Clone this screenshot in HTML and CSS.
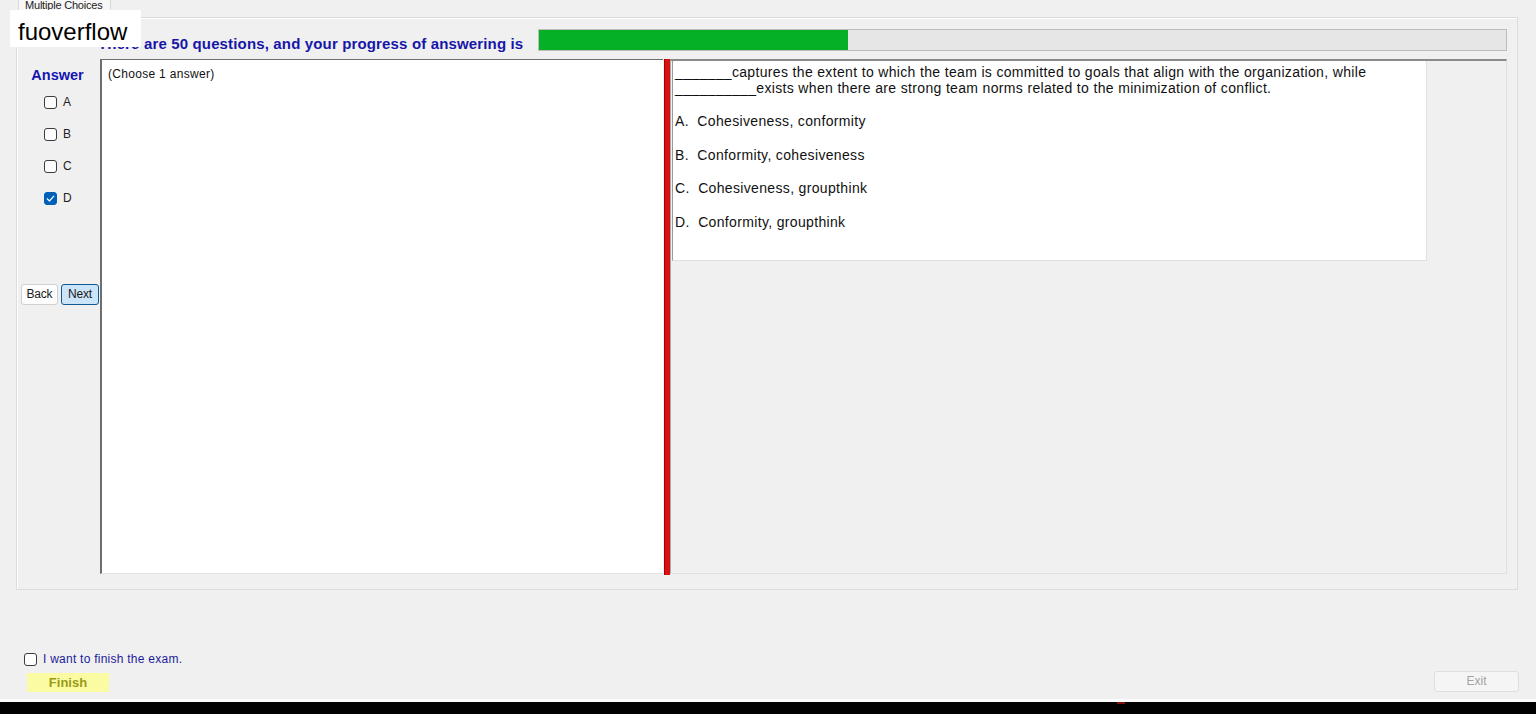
FILE: index.html
```html
<!DOCTYPE html>
<html lang="en">
<head>
<meta charset="utf-8">
<title>Multiple Choices</title>
<link rel="stylesheet" href="styles.css">
</head>
<body>
<div class="window">
  <div class="brand">fuoverflow</div>

  <div class="tabstrip">
    <div class="tab">Multiple Choices</div>
  </div>

  <div class="tabpage">
    <div class="header">
      <div class="title">There are 50 questions, and your progress of answering is</div>
      <div class="progress"><div class="progress-fill" style="width:309px"></div></div>
    </div>

    <div class="content">
      <div class="answers">
        <div class="answers-title">Answer</div>
        <label class="choice"><span class="box"></span><span>A</span></label>
        <label class="choice"><span class="box"></span><span>B</span></label>
        <label class="choice"><span class="box"></span><span>C</span></label>
        <label class="choice"><span class="box checked"><svg viewBox="0 0 13 13" width="13" height="13"><path d="M3.2 6.8 L5.5 9 L9.8 4.2" fill="none" stroke="#fff" stroke-width="1.2" stroke-linecap="round" stroke-linejoin="round"/></svg></span><span>D</span></label>
        <div class="nav">
          <button class="btn">Back</button>
          <button class="btn btn-focus">Next</button>
        </div>
      </div>

      <div class="notes">(Choose 1 answer)</div>

      <div class="splitter"></div>

      <div class="question-pane">
        <div class="question">
          <p class="stem">_______captures the extent to which the team is committed to goals that align with the organization, while<br>__________exists when there are strong team norms related to the minimization of conflict.</p>
          <p class="option">A.&nbsp; Cohesiveness, conformity</p>
          <p class="option">B.&nbsp; Conformity, cohesiveness</p>
          <p class="option">C.&nbsp; Cohesiveness, groupthink</p>
          <p class="option">D.&nbsp; Conformity, groupthink</p>
        </div>
      </div>
    </div>
  </div>

  <div class="footer">
    <div class="finish-group">
      <label class="confirm"><span class="box"></span><span>I want to finish the exam.</span></label>
      <button class="finish">Finish</button>
    </div>
    <button class="exit" disabled>Exit</button>
  </div>

  <div class="edge"></div>
  <div class="taskbar"><span class="tick"></span></div>
</div>
</body>
</html>
```

FILE: styles.css
```css
* {
  box-sizing: border-box;
}

html, body {
  margin: 0;
  padding: 0;
  background: #f0f0f0;
}

body {
  font-family: "Liberation Sans", Arial, sans-serif;
  color: #000;
}

.window {
  position: relative;
  width: 1536px;
  height: 714px;
  overflow: hidden;
  display: flex;
  flex-direction: column;
  background: #f0f0f0;
}

/* watermark label over the top-left corner */
.brand {
  position: absolute;
  left: 10px;
  top: 10px;
  width: 131px;
  height: 37px;
  padding-left: 8px;
  background: #fff;
  font-size: 24px;
  line-height: 43px;
  color: #000;
  z-index: 5;
}

/* tab header */
.tabstrip {
  height: 17px;
  flex: none;
  display: flex;
  align-items: flex-start;
  padding-left: 18px;
}

.tab {
  height: 14px;
  padding: 0 7px 0 6px;
  background: #f7f7f7;
  border: 1px solid #d9d9d9;
  border-top: none;
  border-bottom: none;
  font-size: 11px;
  line-height: 11px;
  color: #222;
  overflow: hidden;
  letter-spacing: -0.2px;
}

/* tab page body */
.tabpage {
  flex: none;
  margin-left: 16px;
  width: 1502px;
  height: 573px;
  border: 1px solid #dcdcdc;
  box-shadow: inset 1px 1px 0 #fff;
  display: flex;
  flex-direction: column;
}

.header {
  height: 41px;
  flex: none;
  display: flex;
  align-items: flex-start;
  padding-left: 81px;
  padding-top: 11px;
}

.title {
  width: 440px;
  padding-top: 6px;
  font-size: 15px;
  font-weight: bold;
  line-height: 17px;
  letter-spacing: 0.15px;
  color: #1616a8;
  white-space: nowrap;
}

.progress {
  width: 969px;
  height: 22px;
  background: #e6e6e6;
  border: 1px solid #bcbcbc;
}

.progress-fill {
  height: 100%;
  background: #06b025;
}

.content {
  height: 516px;
  flex: none;
  display: flex;
}

/* answer column */
.answers {
  width: 83px;
  flex: none;
  display: flex;
  flex-direction: column;
}

.answers-title {
  margin-top: 8px;
  margin-left: -2px;
  height: 16px;
  text-align: center;
  font-size: 14.5px;
  font-weight: bold;
  line-height: 16px;
  color: #1515b0;
}

.choice {
  display: flex;
  align-items: center;
  gap: 6px;
  height: 13px;
  margin-left: 27px;
  font-size: 12px;
  line-height: 13px;
  color: #222;
}

.answers-title + .choice {
  margin-top: 13px;
}

.choice + .choice {
  margin-top: 19px;
}

.box {
  width: 13px;
  height: 13px;
  flex: none;
  border: 1px solid #3c3c3c;
  border-radius: 3px;
  background: #fdfdfd;
  display: inline-flex;
}

.box.checked {
  background: #005fb8;
  border-color: #005fb8;
}

.box svg {
  display: block;
  margin: -1px;
}

.nav {
  margin-top: 79px;
  margin-left: 4px;
  display: flex;
  gap: 3px;
}

.btn {
  height: 21px;
  padding: 0;
  font-family: "Liberation Sans", Arial, sans-serif;
  font-size: 12px;
  line-height: 19px;
  color: #1b1b1b;
  background: #fdfdfd;
  border: 1px solid #d0d0d0;
  border-radius: 3px;
  width: 37px;
  letter-spacing: -0.2px;
}

.btn-focus {
  width: 38px;
  background: #cce4f7;
  border-color: #0f5a94;
}

/* notes text box */
.notes {
  width: 563px;
  flex: none;
  height: 515px;
  background: #fff;
  border-top: 1px solid #6e6e6e;
  border-left: 2px solid #6e6e6e;
  border-bottom: 1px solid #e3e3e3;
  padding: 7px 0 0 6px;
  font-size: 12px;
  line-height: 14px;
  letter-spacing: 0.3px;
  color: #111;
}

.splitter {
  width: 6px;
  flex: none;
  margin-left: 1px;
  height: 516px;
  background: #d81212;
  border-left: 1px solid #a80000;
}

/* question pane */
.question-pane {
  width: 837px;
  flex: none;
  height: 515px;
  background: #f0f0f0;
  border-top: 2px solid #8a8a8a;
  border-left: 1px solid #a8a8a8;
  border-right: 1px solid #e0e0e0;
  border-bottom: 1px solid #e0e0e0;
  padding-left: 1px;
}

.question {
  width: 755px;
  height: 200px;
  background: #fff;
  border-left: 1px solid #9a9a9a;
  border-right: 1px solid #e0e0e0;
  border-bottom: 1px solid #e0e0e0;
  padding: 3px 0 0 2px;
  font-size: 14px;
  line-height: 16px;
  letter-spacing: 0.34px;
  color: #111;
}

.question p {
  margin: 0;
}

.stem {
  margin-bottom: 17px !important;
}

.option + .option {
  margin-top: 17.5px !important;
}

/* bottom area */
.footer {
  flex: 1;
  display: flex;
  justify-content: space-between;
  align-items: flex-end;
  padding: 0 17px 7px 24px;
}

.finish-group {
  display: flex;
  flex-direction: column;
  gap: 6px;
}

.confirm {
  display: flex;
  align-items: center;
  gap: 6px;
  height: 16px;
  font-size: 12px;
  color: #1c1c9a;
  letter-spacing: 0.25px;
}

.finish {
  margin-left: 3px;
  width: 82px;
  height: 19px;
  padding: 0;
  background: #fbfba4;
  border: none;
  font-family: "Liberation Sans", Arial, sans-serif;
  font-size: 13px;
  font-weight: bold;
  line-height: 19px;
  color: #9a9a14;
}

.exit {
  width: 85px;
  height: 21px;
  padding: 0;
  background: #f5f5f5;
  border: 1px solid #dedede;
  border-radius: 3px;
  font-family: "Liberation Sans", Arial, sans-serif;
  font-size: 12px;
  line-height: 19px;
  color: #a3a3a3;
}

.edge {
  height: 3px;
  flex: none;
  background: #fbfbfb;
}

.taskbar {
  height: 12px;
  flex: none;
  background: #000;
  display: flex;
  align-items: flex-start;
}

.tick {
  margin-left: 1117px;
  width: 8px;
  height: 2px;
  background: #7a1010;
}
```
